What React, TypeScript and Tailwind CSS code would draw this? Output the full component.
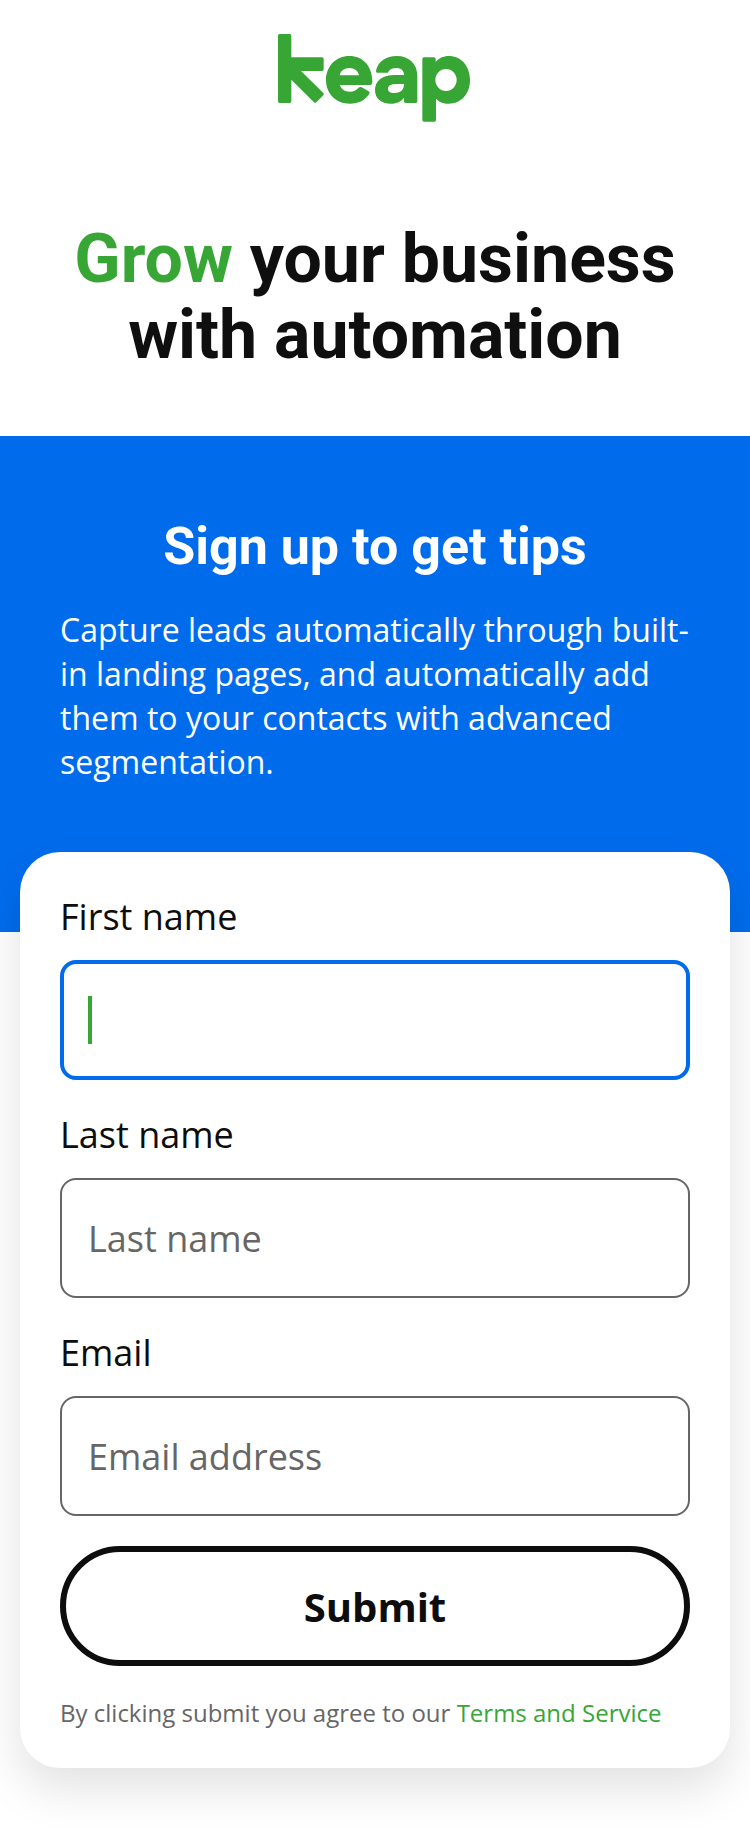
import React from "react";

function KeapLogo() {
  return (
    <svg
      viewBox="0 0 690 330"
      className="block h-[110px] w-[230px] text-[#37a635]"
      fill="currentColor"
      role="img"
      aria-label="Keap"
    >
      <path d="M59 42H89Q94 42 94 47V112H186Q191 112 191 117V148Q191 153 186 153H123L190 219Q193 222 190 226L169 247Q166 250 162 247L94 179V243Q94 249 89 249H59Q54 249 54 243V47Q54 42 59 42Z" />
      <path
        fillRule="evenodd"
        d="M268 108C309 108 337 139 337 185Q337 195 328 195H239C244 208 255 215 270 215C281 215 288 211 296 203Q300 199 305 202L326 214Q331 217 328 221C316 240 295 251 270 251C228 251 198 221 198 180C198 139 228 108 268 108ZM239 166H297C294 153 284 144 268 144C252 144 242 153 239 166Z"
      />
      <path
        fillRule="evenodd"
        d="M410 108C448 108 472 132 472 168V244Q472 249 467 249H437Q432 249 432 244V233C424 244 410 251 393 251C363 251 345 235 345 210C345 182 367 165 405 165H432C432 152 424 144 408 144C397 144 389 148 383 158H352Q347 158 348 152C354 125 378 108 410 108ZM432 192H409C393 192 384 197 384 206C384 215 391 219 403 219C421 219 432 210 432 192Z"
      />
      <path
        fillRule="evenodd"
        d="M492 112H522Q527 112 527 117V126C535 115 550 108 566 108C604 108 630 139 630 180C630 221 604 251 566 251C550 251 536 245 528 236V300Q528 305 523 305H492Q487 305 487 300V117Q487 112 492 112ZM558 147A32 33 0 1 0 558 213A32 33 0 1 0 558 147Z"
      />
    </svg>
  );
}

function Label({ htmlFor, children }: { htmlFor: string; children: React.ReactNode }) {
  return (
    <label htmlFor={htmlFor} className="block h-[50px] text-[36px] leading-[50px] text-[#0d0d0d]">
      {children}
    </label>
  );
}

function TextField({ id, label, placeholder }: { id: string; label: string; placeholder: string }) {
  return (
    <div className="flex flex-col gap-[18px]">
      <Label htmlFor={id}>{label}</Label>
      <input
        id={id}
        placeholder={placeholder}
        className="h-[120px] w-full rounded-2xl border-2 border-[#666666] bg-white px-[26px] text-[36px] text-[#0d0d0d] outline-none placeholder:text-[#666666]"
      />
    </div>
  );
}

export default function App() {
  return (
    <div className="h-[1828px] w-[750px] overflow-hidden bg-white font-['Open_Sans',sans-serif]">
      <header className="flex h-[436px] flex-col items-center pt-5">
        <KeapLogo />
        <h1 className="mt-[91px] text-center font-['Roboto',sans-serif] text-[68px] leading-[76px] font-bold text-[#0f0f0f]">
          <span className="text-[#37a635]">Grow</span> your business
          <br />
          with automation
        </h1>
      </header>

      <section className="h-[496px] bg-[#006cec] px-[60px] pt-[81px] text-white">
        <h2 className="text-center font-['Roboto',sans-serif] text-[52px] leading-[60px] font-bold">
          Sign up to get tips
        </h2>
        <p className="mt-[31px] text-[32px] leading-[44px]">
          Capture leads automatically through built-
          <br />
          in landing pages, and automatically add
          <br />
          them to your contacts with advanced
          <br />
          segmentation.
        </p>
      </section>

      <main className="relative mx-5 -mt-20 h-[916px] rounded-[40px] bg-white px-10 pt-10 shadow-[0_20px_48px_rgba(0,0,0,0.12)]">
        <form className="flex flex-col gap-[30px]" onSubmit={(e) => e.preventDefault()}>
          <div className="flex flex-col gap-[18px]">
            <Label htmlFor="first">First name</Label>
            <div
              id="first"
              className="flex h-[120px] items-center rounded-2xl border-4 border-[#006cec] px-6"
            >
              <span className="h-12 w-1 bg-[#37a635]" />
            </div>
          </div>
          <TextField id="last" label="Last name" placeholder="Last name" />
          <TextField id="email" label="Email" placeholder="Email address" />
          <button
            type="submit"
            className="h-[120px] w-full rounded-full border-[6px] border-[#0d0d0d] pt-0.5 text-[40px] font-bold text-[#0d0d0d]"
          >
            Submit
          </button>
        </form>
        <p className="mt-[30px] text-[24px] leading-[34px] whitespace-nowrap text-[#666666]">
          By clicking submit you agree to our <a className="text-[#37a635]">Terms and Service</a>
        </p>
      </main>
    </div>
  );
}
